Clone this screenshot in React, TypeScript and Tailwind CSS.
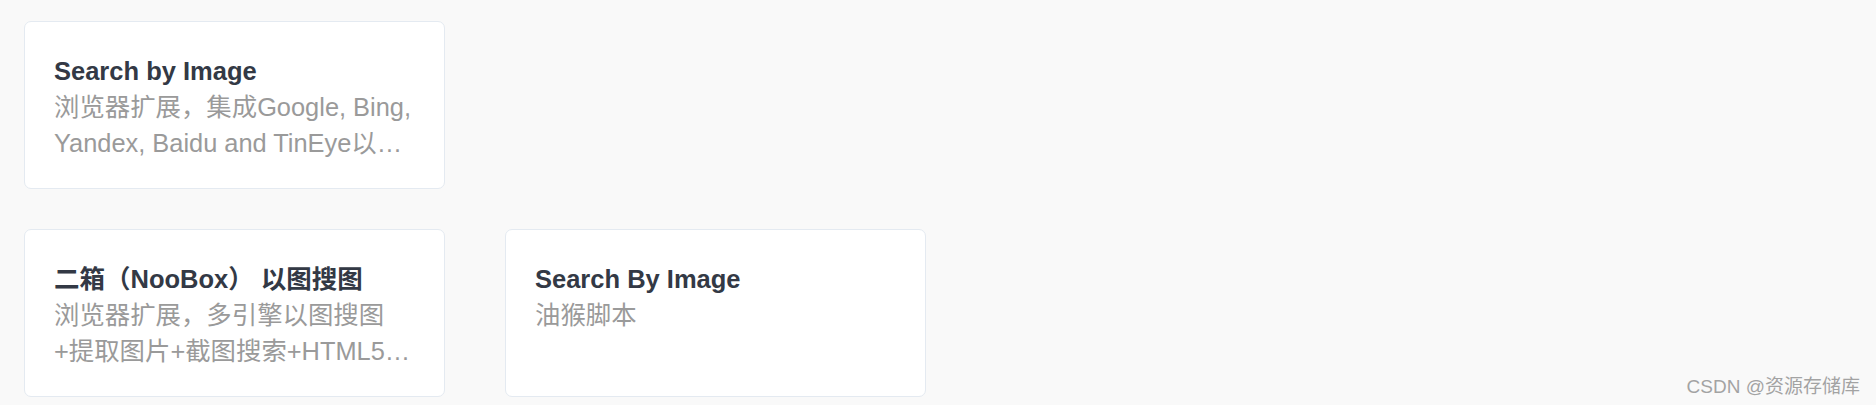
const FONT = '"Liberation Sans", Arial, "Noto Sans CJK SC", sans-serif';

interface Tool {
  title: string;
  desc: string;
}

const rows: Tool[][] = [
  [
    {
      title: "Search by Image",
      desc: "浏览器扩展，集成Google, Bing, Yandex, Baidu and TinEye以及更多图片搜索引擎",
    },
  ],
  [
    {
      title: "二箱（NooBox） 以图搜图",
      desc: "浏览器扩展，多引擎以图搜图+提取图片+截图搜索+HTML5视频截图",
    },
    {
      title: "Search By Image",
      desc: "油猴脚本",
    },
  ],
];

function ToolCard({ tool }: { tool: Tool }) {
  return (
    <div className="w-[421px] h-[168px] shrink-0 bg-white border border-[#e4eaf1] rounded-[7px] pl-[29px] pr-[29px] pt-[31px]">
      <div className="text-[25.5px] leading-[36px] font-bold text-[#333945] whitespace-nowrap">
        {tool.title}
      </div>
      <div className="text-[25.4px] leading-[36px] text-[#9a9a9a] line-clamp-2">
        {tool.desc}
      </div>
    </div>
  );
}

export default function App() {
  return (
    <div
      className="relative w-[1876px] h-[405px] bg-[#f9f9f9] overflow-hidden"
      style={{ fontFamily: FONT }}
    >
      <div className="flex flex-col gap-[40px] pl-[24px] pt-[21px]">
        {rows.map((row, i) => (
          <div key={i} className="flex gap-[60px]">
            {row.map((tool) => (
              <ToolCard key={tool.title} tool={tool} />
            ))}
          </div>
        ))}
      </div>

      {/* watermark */}
      <div className="absolute right-[16px] bottom-[6px] text-[19px] leading-[24px] text-[#a3a3a3] [text-shadow:0_0_1px_#ffffff]">
        CSDN @资源存储库
      </div>
    </div>
  );
}
